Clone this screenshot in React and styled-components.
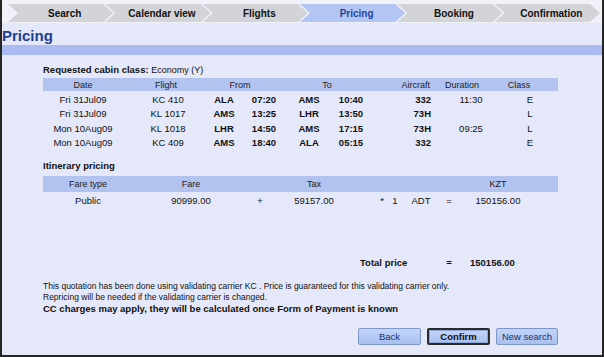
import React from 'react';
import styled, { createGlobalStyle } from 'styled-components';

const FONT = `"Liberation Sans", Arial, sans-serif`;

const Global = createGlobalStyle`
  html, body { margin: 0; padding: 0; background: #e5e8f8; }
  body { font-family: ${FONT}; font-size: 9px; color: #111; }
`;

const Frame = styled.div`
  width: 604px;
  height: 357px;
  box-sizing: border-box;
  border: 2px solid #262626;
  border-top: none;
  background: #e5e8f8;
  display: flex;
  flex-direction: column;
  overflow: hidden;
`;

const TabBar = styled.div`
  display: flex;
  padding: 4px 2px 1px 6px;
  background: #f1f2f9;
`;

const Tab = styled.div`
  flex: 1;
  height: 18px;
  margin-left: -8px;
  padding-left: 8px;
  &:first-child { margin-left: 0; }
  clip-path: polygon(0 0, calc(100% - 10px) 0, 100% 50%, calc(100% - 10px) 100%, 0 100%, 10px 50%);
  background: ${p => (p.$active ? '#b3c5f3' : '#d3d4d8')};
  color: ${p => (p.$active ? '#23449a' : '#111')};
  display: flex;
  align-items: center;
  justify-content: center;
  font-weight: bold;
  font-size: 10px;
`;

const Title = styled.h1`
  margin: 3px 0 0 0;
  font-size: 15px;
  line-height: 19px;
  font-weight: bold;
  color: #1e3f95;
`;

const Band = styled.div`
  height: 10px;
  background: #a9bbf0;
`;

const Content = styled.div`
  padding-left: 41px;
  width: 515px;
  display: flex;
  flex-direction: column;
`;

const Label = styled.div`
  margin-top: ${p => p.$mt || 0}px;
  line-height: 12px;
  font-size: 9.5px;
  font-weight: bold;
  span { font-weight: normal; font-size: 9px; }
`;

const HeadRow = styled.div`
  display: grid;
  grid-template-columns: ${p => p.$cols};
  height: ${p => p.$h}px;
  margin-top: ${p => p.$mt || 0}px;
  align-items: center;
  background: #b3c3ef;
  color: #222;
  font-size: 9px;
`;

const Row = styled.div`
  display: grid;
  grid-template-columns: ${p => p.$cols};
  height: ${p => p.$h}px;
  align-items: center;
  font-size: 9.5px;
`;

const Cell = styled.div`
  text-align: ${p => p.$align || 'center'};
  font-weight: ${p => (p.$bold ? 'bold' : 'normal')};
  padding-right: ${p => p.$pr || 0}px;
  padding-left: ${p => p.$pl || 0}px;
  white-space: nowrap;
`;

const Body = styled.div`
  padding-top: 1px;
`;

const FLIGHT_HEAD = '80px 86px 62px 112px 47px 64px 50px 1fr';
const FLIGHT_ROW = '80px 90px 22px 58px 32px 52px 54px 80px 38px 1fr';
const PRICE_COLS = '90px 116px 22px 86px 31px 14px 38px 18px 80px 1fr';

const flights = [
  ['Fri 31Jul09', 'KC 410', 'ALA', '07:20', 'AMS', '10:40', '332', '11:30', 'E'],
  ['Fri 31Jul09', 'KL 1017', 'AMS', '13:25', 'LHR', '13:50', '73H', '', 'L'],
  ['Mon 10Aug09', 'KL 1018', 'LHR', '14:50', 'AMS', '17:15', '73H', '09:25', 'L'],
  ['Mon 10Aug09', 'KC 409', 'AMS', '18:40', 'ALA', '05:15', '332', '', 'E'],
];

const TotalRow = styled.div`
  display: grid;
  grid-template-columns: 317px 80px 18px 1fr;
  margin-top: 47px;
  height: 14px;
  align-items: center;
  font-size: 9.5px;
`;

const Notes = styled.div`
  margin-top: 12px;
  line-height: 11px;
  font-size: 8.5px;
  p { margin: 0; }
  strong { font-size: 9.5px; }
`;

const Buttons = styled.div`
  display: flex;
  justify-content: flex-end;
  gap: 6px;
  margin-top: 13px;
`;

const Button = styled.button`
  width: ${p => p.$w}px;
  height: 17px;
  padding: 0;
  font-family: ${FONT};
  font-size: 9.5px;
  font-weight: ${p => (p.$primary ? 'bold' : 'normal')};
  color: ${p => (p.$primary ? '#111' : '#1f3468')};
  background: linear-gradient(#c3d4f7, #a9c0ef);
  border: ${p => (p.$primary ? '2px solid #2b2b2b' : '1px solid #7d98c8')};
  border-radius: 2px;
  box-shadow: ${p => (p.$primary ? 'inset 0 0 0 1px #8ea8da' : 'none')};
`;

export default function App() {
  const tabs = ['Search', 'Calendar view', 'Flights', 'Pricing', 'Booking', 'Confirmation'];
  return (
    <>
      <Global />
      <Frame>
        <TabBar>
          {tabs.map(t => (
            <Tab key={t} $active={t === 'Pricing'}>{t}</Tab>
          ))}
        </TabBar>
        <Title>Pricing</Title>
        <Band />
        <Content>
          <Label $mt={9}>Requested cabin class: <span>Economy (Y)</span></Label>
          <HeadRow $cols={FLIGHT_HEAD} $h={13} $mt={2}>
            <Cell>Date</Cell>
            <Cell>Flight</Cell>
            <Cell>From</Cell>
            <Cell>To</Cell>
            <Cell $align="right">Aircraft</Cell>
            <Cell>Duration</Cell>
            <Cell>Class</Cell>
            <Cell />
          </HeadRow>
          <Body>
            {flights.map((f, i) => (
              <Row key={i} $cols={FLIGHT_ROW} $h={14.5}>
                <Cell>{f[0]}</Cell>
                <Cell>{f[1]}</Cell>
                <Cell $bold>{f[2]}</Cell>
                <Cell $bold>{f[3]}</Cell>
                <Cell $bold>{f[4]}</Cell>
                <Cell $bold>{f[5]}</Cell>
                <Cell $bold $align="right">{f[6]}</Cell>
                <Cell>{f[7]}</Cell>
                <Cell>{f[8]}</Cell>
                <Cell />
              </Row>
            ))}
          </Body>
          <Label $mt={10}>Itinerary pricing</Label>
          <HeadRow $cols={PRICE_COLS} $h={16} $mt={4}>
            <Cell>Fare type</Cell>
            <Cell>Fare</Cell>
            <Cell />
            <Cell>Tax</Cell>
            <Cell />
            <Cell />
            <Cell />
            <Cell />
            <Cell>KZT</Cell>
            <Cell />
          </HeadRow>
          <Row $cols={PRICE_COLS} $h={16}>
            <Cell>Public</Cell>
            <Cell>90999.00</Cell>
            <Cell>+</Cell>
            <Cell>59157.00</Cell>
            <Cell $align="right" $pr={4}>*</Cell>
            <Cell>1</Cell>
            <Cell>ADT</Cell>
            <Cell>=</Cell>
            <Cell>150156.00</Cell>
            <Cell />
          </Row>
          <TotalRow>
            <span />
            <Cell $align="left" $bold>Total price</Cell>
            <Cell $bold>=</Cell>
            <Cell $align="left" $pl={12} $bold>150156.00</Cell>
          </TotalRow>
          <Notes>
            <p>This quotation has been done using validating carrier KC . Price is guaranteed for this validating carrier only.</p>
            <p>Repricing will be needed if the validating carrier is changed.</p>
            <p><strong>CC charges may apply, they will be calculated once Form of Payment is known</strong></p>
          </Notes>
          <Buttons>
            <Button $w={63}>Back</Button>
            <Button $w={63} $primary>Confirm</Button>
            <Button $w={62}>New search</Button>
          </Buttons>
        </Content>
      </Frame>
    </>
  );
}
